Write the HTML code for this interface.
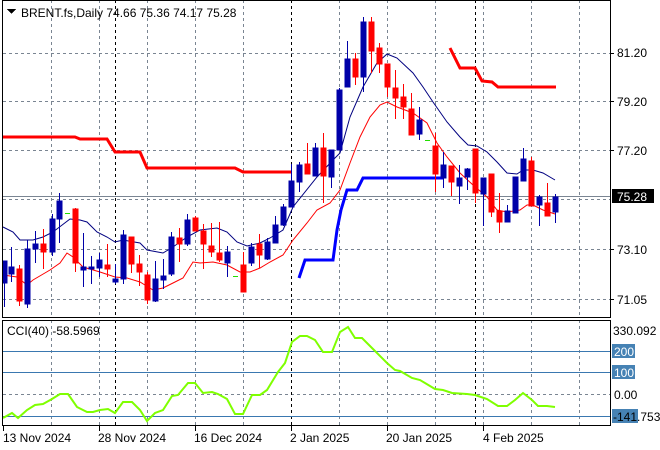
<!DOCTYPE html>
<html><head><meta charset="utf-8"><style>
html,body{margin:0;padding:0;background:#fff;width:660px;height:450px;overflow:hidden}
svg{display:block}
text{font-family:"Liberation Sans",sans-serif;font-size:12px;fill:#000}
</style></head><body>
<svg width="660" height="450" viewBox="0 0 660 450" xmlns="http://www.w3.org/2000/svg" shape-rendering="crispEdges">
<rect width="660" height="450" fill="#fff"/>
<!-- grid main -->
<g stroke="#7a8592" stroke-dasharray="3,3" stroke-width="1">
<line x1="3" y1="53.5" x2="610" y2="53.5"/><line x1="3" y1="101.5" x2="610" y2="101.5"/><line x1="3" y1="150.5" x2="610" y2="150.5"/><line x1="3" y1="199.5" x2="610" y2="199.5"/><line x1="3" y1="249.5" x2="610" y2="249.5"/><line x1="3" y1="299.5" x2="610" y2="299.5"/>
<line x1="51.5" y1="0" x2="51.5" y2="318"/><line x1="99.5" y1="0" x2="99.5" y2="318"/><line x1="147.5" y1="0" x2="147.5" y2="318"/><line x1="195.5" y1="0" x2="195.5" y2="318"/><line x1="243.5" y1="0" x2="243.5" y2="318"/><line x1="339.5" y1="0" x2="339.5" y2="318"/><line x1="387.5" y1="0" x2="387.5" y2="318"/><line x1="435.5" y1="0" x2="435.5" y2="318"/><line x1="483.5" y1="0" x2="483.5" y2="318"/><line x1="531.5" y1="0" x2="531.5" y2="318"/><line x1="579.5" y1="0" x2="579.5" y2="318"/>
<line x1="51.5" y1="320" x2="51.5" y2="426"/><line x1="99.5" y1="320" x2="99.5" y2="426"/><line x1="147.5" y1="320" x2="147.5" y2="426"/><line x1="195.5" y1="320" x2="195.5" y2="426"/><line x1="243.5" y1="320" x2="243.5" y2="426"/><line x1="339.5" y1="320" x2="339.5" y2="426"/><line x1="387.5" y1="320" x2="387.5" y2="426"/><line x1="435.5" y1="320" x2="435.5" y2="426"/><line x1="483.5" y1="320" x2="483.5" y2="426"/><line x1="531.5" y1="320" x2="531.5" y2="426"/><line x1="579.5" y1="320" x2="579.5" y2="426"/>
<line x1="3" y1="394.5" x2="610" y2="394.5"/>
</g>
<g stroke="#000" stroke-dasharray="3,3" stroke-width="1">
<line x1="115.5" y1="0" x2="115.5" y2="318"/><line x1="291.5" y1="0" x2="291.5" y2="318"/><line x1="475.5" y1="0" x2="475.5" y2="318"/>
<line x1="115.5" y1="320" x2="115.5" y2="426"/><line x1="291.5" y1="320" x2="291.5" y2="426"/><line x1="475.5" y1="320" x2="475.5" y2="426"/>
</g>
<line x1="3" y1="196.5" x2="610" y2="196.5" stroke="#7a8592"/>
<!-- CCI levels -->
<g stroke="#3a78b0"><line x1="3" y1="351.5" x2="610" y2="351.5"/><line x1="3" y1="372.5" x2="610" y2="372.5"/><line x1="3" y1="416.5" x2="610" y2="416.5"/></g>

<!-- stop lines -->
<g fill="none" stroke-width="3" shape-rendering="auto">
<polyline stroke="#ff0000" points="3,137 75,137 80,139 107,139 115,152 140,152 147,168 235,168 243,172 292,172"/>
<polyline stroke="#ff0000" points="450,48 460,68 475,68 482,81 492,82 498,87 556,87"/>
<polyline stroke="#0000ff" points="299,278 305,260 333,260 337,230 341,210 347,190 357,190 363,178 443,178"/>
</g>
<!-- MAs -->
<g fill="none" stroke-width="1" shape-rendering="auto">
<polyline stroke="#000080" points="3,227 13,232 20,240 33,240 43,237 53,232 70,219 80,220 87,222 97,232 107,237 115,242 123,240 140,243 147,250 163,253 173,247 187,237 200,230 217,228 227,232 237,242 247,246 260,243 270,238 283,230 293,207 317,177 333,160 340,153 350,117 363,87 377,63 387,54 397,58 413,73 423,87 433,102 447,122 460,137 468,145 477,146 487,152 497,162 507,173 517,174 523,170 533,170 543,173 555,180"/>
<polyline stroke="#ff0000" points="3,275 17,277 27,285 33,280 50,270 60,263 67,253 73,257 83,267 100,272 115,277 127,278 140,282 153,290 163,288 173,283 183,278 193,262 200,263 213,262 227,265 240,272 250,272 260,268 270,262 283,255 293,240 307,223 317,210 330,203 340,190 350,163 360,137 370,117 380,105 387,102 397,107 413,113 427,123 437,143 447,157 460,173 473,185 487,197 497,210 507,212 520,210 527,205 533,205 543,210 555,214"/>
</g>
<!-- candles -->
<g id="c" stroke-width="1">
<g stroke="#0000a8" fill="#0000a8">
<line x1="4.5" y1="261" x2="4.5" y2="307"/><rect x="3" y="261" width="4" height="22"/>
<line x1="11.5" y1="247" x2="11.5" y2="282"/><rect x="9" y="267" width="5" height="7"/>
<line x1="27.5" y1="240" x2="27.5" y2="308"/><rect x="25" y="249" width="5" height="55"/>
<line x1="35.5" y1="231" x2="35.5" y2="263"/><rect x="33" y="244" width="5" height="5"/>
<line x1="52.5" y1="214" x2="52.5" y2="256"/><rect x="50" y="219" width="5" height="33"/>
<line x1="59.5" y1="193" x2="59.5" y2="243"/><rect x="57" y="201" width="5" height="18"/>
<line x1="83.5" y1="233" x2="83.5" y2="287"/><rect x="81" y="267" width="5" height="3"/>
<line x1="91.5" y1="256" x2="91.5" y2="284"/><rect x="89" y="267" width="5" height="2"/>
<line x1="99.5" y1="253" x2="99.5" y2="277"/><rect x="97" y="260" width="5" height="8"/>
<line x1="115.5" y1="264" x2="115.5" y2="284"/><rect x="113" y="279" width="5" height="3"/>
<line x1="123.5" y1="230" x2="123.5" y2="284"/><rect x="121" y="235" width="5" height="44"/>
<line x1="155.5" y1="261" x2="155.5" y2="302"/><rect x="153" y="279" width="5" height="22"/>
<line x1="163.5" y1="259" x2="163.5" y2="289"/><rect x="161" y="276" width="5" height="4"/>
<line x1="171.5" y1="232" x2="171.5" y2="276"/><rect x="169" y="237" width="5" height="37"/>
<line x1="187.5" y1="214" x2="187.5" y2="246"/><rect x="185" y="220" width="5" height="24"/>
<line x1="227.5" y1="246" x2="227.5" y2="277"/><rect x="225" y="252" width="5" height="11"/>
<line x1="251.5" y1="243" x2="251.5" y2="266"/><rect x="249" y="247" width="5" height="16"/>
<line x1="267.5" y1="238" x2="267.5" y2="260"/><rect x="265" y="242" width="5" height="17"/>
<line x1="275.5" y1="216" x2="275.5" y2="243"/><rect x="273" y="225" width="5" height="18"/>
<line x1="283.5" y1="204" x2="283.5" y2="226"/><rect x="281" y="207" width="5" height="18"/>
<line x1="291.5" y1="164" x2="291.5" y2="207"/><rect x="289" y="181" width="5" height="26"/>
<line x1="299.5" y1="162" x2="299.5" y2="192"/><rect x="297" y="165" width="5" height="17"/>
<line x1="315.5" y1="143" x2="315.5" y2="176"/><rect x="313" y="148" width="5" height="28"/>
<line x1="331.5" y1="150" x2="331.5" y2="188"/><rect x="329" y="150" width="5" height="27"/>
<line x1="339.5" y1="88" x2="339.5" y2="150"/><rect x="337" y="90" width="5" height="60"/>
<line x1="347.5" y1="41" x2="347.5" y2="87"/><rect x="345" y="59" width="5" height="28"/>
<line x1="363.5" y1="17" x2="363.5" y2="92"/><rect x="361" y="22" width="5" height="55"/>
<line x1="419.5" y1="107" x2="419.5" y2="140"/><rect x="417" y="120" width="5" height="14"/>
<line x1="443.5" y1="152" x2="443.5" y2="188"/><rect x="441" y="165" width="5" height="13"/>
<line x1="459.5" y1="165" x2="459.5" y2="204"/><rect x="457" y="178" width="5" height="8"/>
<line x1="467.5" y1="168" x2="467.5" y2="190"/><rect x="465" y="169" width="5" height="8"/>
<line x1="483.5" y1="178" x2="483.5" y2="226"/><rect x="481" y="178" width="5" height="16"/>
<line x1="507.5" y1="205" x2="507.5" y2="222"/><rect x="505" y="211" width="5" height="11"/>
<line x1="515.5" y1="177" x2="515.5" y2="213"/><rect x="513" y="177" width="5" height="36"/>
<line x1="523.5" y1="148" x2="523.5" y2="181"/><rect x="521" y="159" width="5" height="22"/>
<line x1="539.5" y1="195" x2="539.5" y2="226"/><rect x="537" y="197" width="5" height="8"/>
<line x1="555.5" y1="194" x2="555.5" y2="223"/><rect x="553" y="197" width="5" height="15"/>
</g>
<g stroke="#ff0000" fill="#ff0000">
<line x1="19.5" y1="265" x2="19.5" y2="306"/><rect x="17" y="269" width="5" height="32"/>
<line x1="43.5" y1="229" x2="43.5" y2="269"/><rect x="41" y="244" width="5" height="8"/>
<line x1="75.5" y1="208" x2="75.5" y2="272"/><rect x="73" y="209" width="5" height="54"/>
<line x1="107.5" y1="244" x2="107.5" y2="277"/><rect x="105" y="265" width="5" height="4"/>
<line x1="131.5" y1="237" x2="131.5" y2="273"/><rect x="129" y="237" width="5" height="27"/>
<line x1="139.5" y1="255" x2="139.5" y2="286"/><rect x="137" y="264" width="5" height="8"/>
<line x1="147.5" y1="272" x2="147.5" y2="304"/><rect x="145" y="275" width="5" height="25"/>
<line x1="179.5" y1="228" x2="179.5" y2="262"/><rect x="177" y="238" width="5" height="6"/>
<line x1="195.5" y1="216" x2="195.5" y2="231"/><rect x="193" y="218" width="5" height="13"/>
<line x1="203.5" y1="224" x2="203.5" y2="269"/><rect x="201" y="231" width="5" height="13"/>
<line x1="211.5" y1="223" x2="211.5" y2="257"/><rect x="209" y="246" width="5" height="6"/>
<line x1="219.5" y1="222" x2="219.5" y2="262"/><rect x="217" y="253" width="5" height="7"/>
<line x1="243.5" y1="252" x2="243.5" y2="292"/><rect x="241" y="265" width="5" height="27"/>
<line x1="259.5" y1="234" x2="259.5" y2="268"/><rect x="257" y="244" width="5" height="11"/>
<line x1="307.5" y1="143" x2="307.5" y2="174"/><rect x="305" y="164" width="5" height="10"/>
<line x1="323.5" y1="133" x2="323.5" y2="203"/><rect x="321" y="148" width="5" height="28"/>
<line x1="355.5" y1="53" x2="355.5" y2="85"/><rect x="353" y="59" width="5" height="18"/>
<line x1="371.5" y1="17" x2="371.5" y2="73"/><rect x="369" y="22" width="5" height="29"/>
<line x1="379.5" y1="43" x2="379.5" y2="73"/><rect x="377" y="48" width="5" height="16"/>
<line x1="387.5" y1="64" x2="387.5" y2="97"/><rect x="385" y="64" width="5" height="23"/>
<line x1="395.5" y1="70" x2="395.5" y2="119"/><rect x="393" y="88" width="5" height="10"/>
<line x1="403.5" y1="84" x2="403.5" y2="119"/><rect x="401" y="97" width="5" height="10"/>
<line x1="411.5" y1="93" x2="411.5" y2="135"/><rect x="409" y="109" width="5" height="26"/>
<line x1="435.5" y1="133" x2="435.5" y2="192"/><rect x="433" y="146" width="5" height="28"/>
<line x1="451.5" y1="166" x2="451.5" y2="196"/><rect x="449" y="166" width="5" height="16"/>
<line x1="475.5" y1="149" x2="475.5" y2="203"/><rect x="473" y="149" width="5" height="44"/>
<line x1="491.5" y1="174" x2="491.5" y2="217"/><rect x="489" y="174" width="5" height="38"/>
<line x1="499.5" y1="193" x2="499.5" y2="233"/><rect x="497" y="211" width="5" height="11"/>
<line x1="531.5" y1="157" x2="531.5" y2="206"/><rect x="529" y="161" width="5" height="45"/>
<line x1="547.5" y1="183" x2="547.5" y2="216"/><rect x="545" y="203" width="5" height="13"/>
</g>
<g fill="#22dd00"><rect x="65" y="213" width="5" height="1"/><rect x="233" y="276" width="5" height="1"/><rect x="425" y="140" width="5" height="1"/></g>
</g>
<!-- CCI line -->
<polyline fill="none" stroke="#7fff00" stroke-width="2" shape-rendering="auto" points="3,418 12,413 18,418 27,410 35,405 43,404 52,399 60,394 68,394 77,407 87,412 93,412 100,410 108,409 115,413 123,402 132,402 140,410 147,421 155,413 163,410 172,396 178,395 188,383 195,383 203,393 212,392 218,394 227,399 235,414 243,414 252,395 260,395 267,390 278,372 285,363 292,342 300,336 307,336 315,340 323,352 332,352 340,332 348,327 355,338 362,338 373,349 387,363 395,370 400,371 412,378 420,380 435,389 443,390 452,393 467,394 475,395 487,399 498,406 507,406 515,400 523,393 532,400 538,406 547,406 555,407"/>
<!-- frames -->
<g stroke="#000" fill="none">
<rect x="2.5" y="0.5" width="608" height="317"/>
<rect x="2.5" y="320.5" width="608" height="105"/>
</g>
<g stroke="#000">
<line x1="610" y1="53.5" x2="614" y2="53.5"/><line x1="610" y1="101.5" x2="614" y2="101.5"/><line x1="610" y1="150.5" x2="614" y2="150.5"/><line x1="610" y1="249.5" x2="614" y2="249.5"/><line x1="610" y1="299.5" x2="614" y2="299.5"/>
<line x1="3.5" y1="426" x2="3.5" y2="431"/><line x1="99.5" y1="426" x2="99.5" y2="431"/><line x1="195.5" y1="426" x2="195.5" y2="431"/><line x1="291.5" y1="426" x2="291.5" y2="431"/><line x1="387.5" y1="426" x2="387.5" y2="431"/><line x1="483.5" y1="426" x2="483.5" y2="431"/>
</g>
<!-- header -->
<polygon points="7,9 16,9 11.5,14" fill="#000"/>
<text x="21" y="17">BRENT.fs,Daily  74.66 75.36 74.17 75.28</text>
<text x="7" y="335">CCI(40) -58.5969</text>
<!-- price labels -->
<text x="617" y="57">81.20</text>
<text x="617" y="106">79.20</text>
<text x="617" y="155">77.20</text>
<rect x="612" y="189" width="42" height="14" fill="#000"/>
<text x="617" y="201" fill="#fff" style="fill:#fff">75.28</text>
<text x="617" y="254">73.10</text>
<text x="617" y="304">71.05</text>
<text x="613" y="335">330.092</text>
<rect x="612" y="344" width="23" height="14" fill="#4682b4"/>
<text x="614" y="356" style="fill:#fff">200</text>
<rect x="612" y="365" width="23" height="14" fill="#4682b4"/>
<text x="614" y="377" style="fill:#fff">100</text>
<text x="614" y="399">0.00</text>
<rect x="612" y="409" width="26" height="14" fill="#4682b4"/>
<text x="613" y="421">-141.753</text>
<!-- dates -->
<text x="3" y="442">13 Nov 2024</text>
<text x="98" y="442">28 Nov 2024</text>
<text x="194" y="442">16 Dec 2024</text>
<text x="290" y="442">2 Jan 2025</text>
<text x="386" y="442">20 Jan 2025</text>
<text x="483" y="442">4 Feb 2025</text>
</svg>
</body></html>
